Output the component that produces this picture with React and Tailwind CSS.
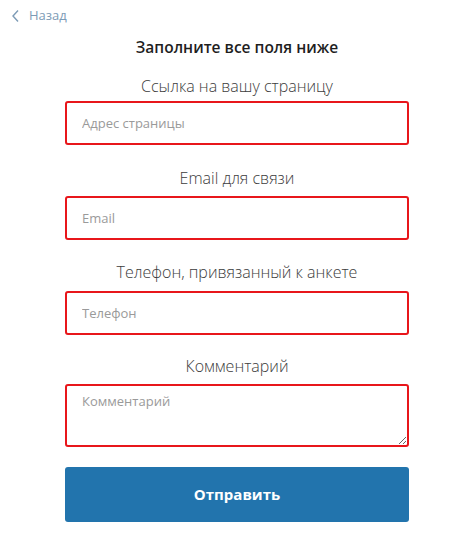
import React from "react";

const font = { fontFamily: '"Open Sans", "Noto Sans", sans-serif' };

const Field = ({ label, placeholder, className, labelClass, textarea }) => (
  <div className={className}>
    <div className={`text-center text-[16px] leading-5 font-light text-[#3c3c3c] ${labelClass}`}>{label}</div>
    {textarea ? (
      <textarea
        placeholder={placeholder}
        className="block w-full h-[63px] border-2 border-[#e8161b] rounded-[3px] px-[15px] py-[6px] text-[13px] text-[#333] placeholder:text-[#9a9a9a] outline-none resize-y"
        style={font}
      />
    ) : (
      <input
        placeholder={placeholder}
        className="block w-full h-[44px] border-2 border-[#e8161b] rounded-[3px] px-[15px] text-[13px] text-[#333] placeholder:text-[#9a9a9a] outline-none"
        style={font}
      />
    )}
  </div>
);

export default function App() {
  return (
    <div className="w-[474px] h-[535px] bg-white" style={font}>
      <div className="h-8 flex items-center pl-[11px] gap-[9px] text-[#7d9bb6]">
        <svg width="9" height="14" viewBox="0 0 9 14" fill="none">
          <path d="M7 1.5 L2 7 L7 12.5" stroke="#7d9bb6" strokeWidth="1.4" />
        </svg>
        <span className="text-[13px]">Назад</span>
      </div>
      <div className="px-[65px]">
        <h1 className="mt-[5px] text-center text-[15.5px] leading-5 font-semibold text-[#1e1e1e]">
          Заполните все поля ниже
        </h1>
        <Field className="mt-[19px]" labelClass="mb-[5px]" label="Ссылка на вашу страницу" placeholder="Адрес страницы" />
        <Field className="mt-[23px]" labelClass="mb-[8px]" label="Email для связи" placeholder="Email" />
        <Field className="mt-[22px]" labelClass="mb-[9px]" label="Телефон, привязанный к анкете" placeholder="Телефон" />
        <Field className="mt-[21px]" labelClass="mb-[8px]" label="Комментарий" placeholder="Комментарий" textarea />
        <button
          className="mt-[20px] w-full h-[55px] rounded-[3px] bg-[#2274ad] text-white text-[15px] font-bold"
          style={font}
        >
          Отправить
        </button>
      </div>
    </div>
  );
}
